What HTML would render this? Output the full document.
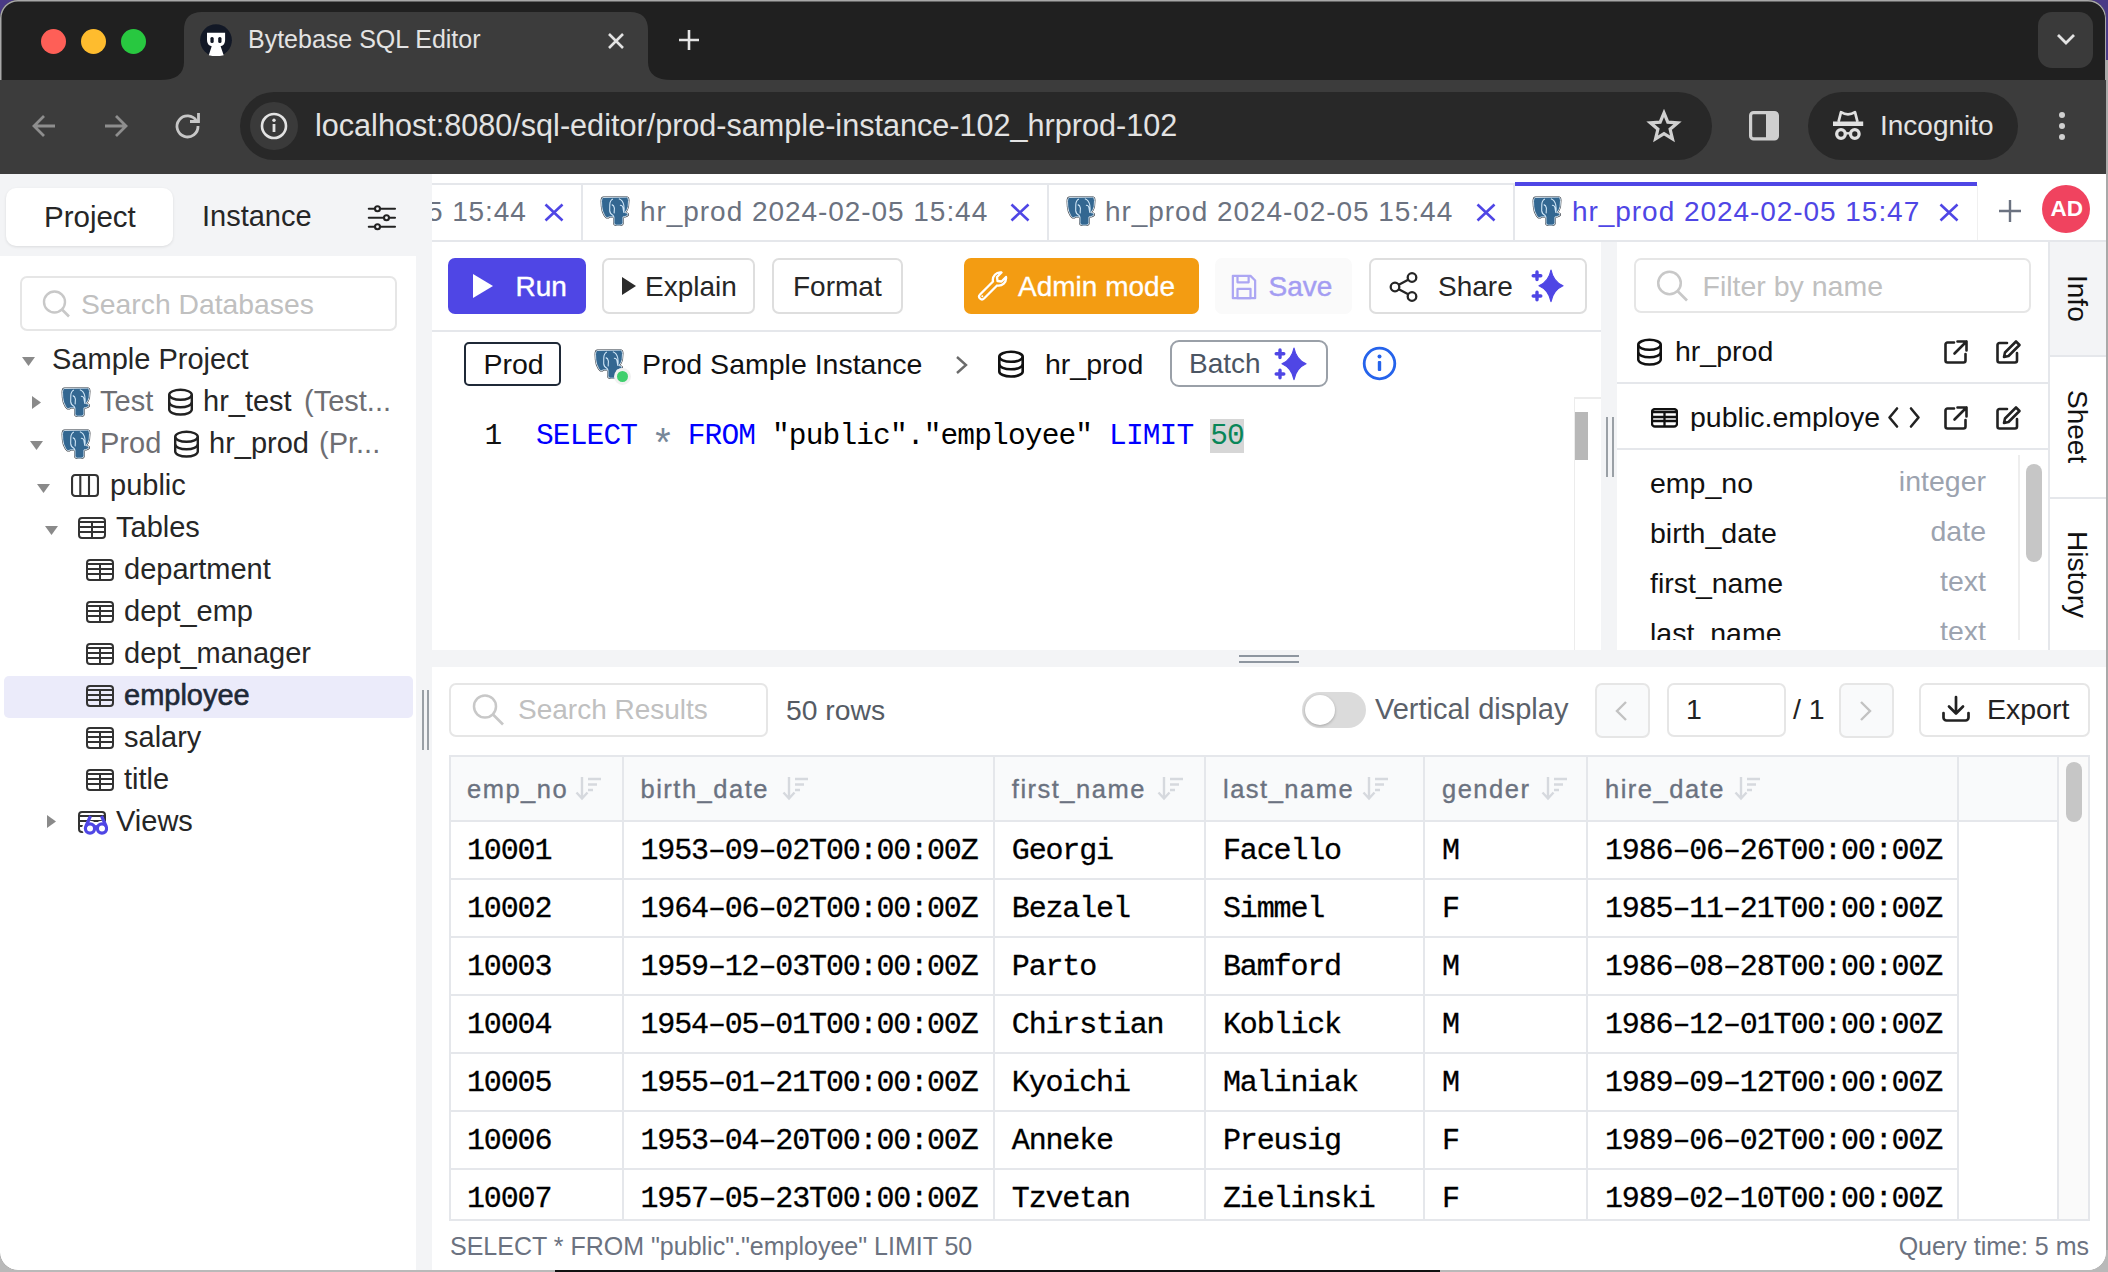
<!DOCTYPE html><html><head><meta charset="utf-8"><title>Bytebase SQL Editor</title><style>
html,body{margin:0;padding:0;}
body{width:2108px;height:1272px;position:relative;overflow:hidden;background:#b8b8b8;font-family:"Liberation Sans", sans-serif;}
.r{position:absolute;box-sizing:border-box;}
.t{position:absolute;white-space:nowrap;line-height:1;}
.s{font-family:"Liberation Sans", sans-serif;}
.m{font-family:"Liberation Mono", monospace;}
</style></head><body>

<div class="r" style="left:0px;top:0px;width:2108px;height:60px;background:#4a3a86;"></div>
<div class="r" style="left:2106px;top:60px;width:2px;height:1212px;background:#a9a9a9;"></div>
<div class="r" style="left:0px;top:1250px;width:2108px;height:22px;background:#b9b9b9;"></div>
<div class="r" style="left:555px;top:1262px;width:885px;height:10px;background:#111;"></div>
<div class="r" style="left:0px;top:0px;width:2106px;height:1270px;background:#202020;border-radius:18px;overflow:hidden;box-shadow:0 0 0 1.5px #a8a8a8 inset;"></div>
<div class="r" style="left:1.5px;top:1.5px;width:2103.0px;height:78.5px;background:#202020;border-radius:17px 17px 0 0;"></div>
<svg class="r" style="left:160px;top:12px" width="512" height="68" viewBox="0 0 512 68">
<path d="M0 68 Q24 68 24 50 L24 18 Q24 0 42 0 L470 0 Q488 0 488 18 L488 50 Q488 68 512 68 Z" fill="#3c3c3c"/></svg>
<div class="r" style="left:41px;top:29px;width:25px;height:25px;border-radius:50%;background:#fe5f57;"></div>
<div class="r" style="left:81px;top:29px;width:25px;height:25px;border-radius:50%;background:#febc2e;"></div>
<div class="r" style="left:121px;top:29px;width:25px;height:25px;border-radius:50%;background:#28c840;"></div>
<svg class="r" style="left:200px;top:24px" width="32" height="33" viewBox="0 0 32 33">
<circle cx="16" cy="16.2" r="15.9" fill="#121826"/>
<path d="M7 8.8 H25.1 V16 Q25.1 21.5 20.6 22.3 L23.7 31.2 Q16 33 8.8 31.2 L11.7 22.3 Q7 21.5 7 16 Z" fill="#fff"/>
<rect x="10.4" y="13.1" width="3.3" height="5.9" rx="1.5" fill="#121826"/><rect x="18.2" y="13.1" width="3.3" height="5.9" rx="1.5" fill="#121826"/></svg>
<div class="t s" style="left:248px;top:27.33px;font-size:25px;color:#e3e3e3;">Bytebase SQL Editor</div>
<svg class="r" style="left:606px;top:31px;" width="20" height="20" viewBox="0 0 20 20"><path d="M3 3 L17 17 M17 3 L3 17" stroke="#e3e3e3" stroke-width="2.6" stroke-linecap="butt"/></svg>
<svg class="r" style="left:678px;top:29px;" width="22" height="22" viewBox="0 0 22 22"><path d="M11 1 V21 M1 11 H21" stroke="#e3e3e3" stroke-width="2.6"/></svg>
<div class="r" style="left:2038px;top:12px;width:55px;height:56px;background:#3a3a3a;border-radius:14px;"></div>
<svg class="r" style="left:2056px;top:32px;" width="20" height="14" viewBox="0 0 20 14"><path d="M2 3 L10 11 L18 3" stroke="#e3e3e3" stroke-width="2.8" fill="none"/></svg>
<div class="r" style="left:0px;top:80px;width:2106px;height:94px;background:#3c3c3c;"></div>
<svg class="r" style="left:30px;top:112px;" width="28" height="28" viewBox="0 0 28 28"><path d="M25 14 H5 M14 4 L4 14 L14 24" stroke="#8e8e8e" stroke-width="2.8" fill="none"/></svg>
<svg class="r" style="left:102px;top:112px;" width="28" height="28" viewBox="0 0 28 28"><path d="M3 14 H23 M14 4 L24 14 L14 24" stroke="#8e8e8e" stroke-width="2.8" fill="none"/></svg>
<svg class="r" style="left:174px;top:112px;" width="28" height="28" viewBox="0 0 28 28"><path d="M22.5 9 A10.5 10.5 0 1 0 24 14" stroke="#c7c7c7" stroke-width="2.8" fill="none"/><path d="M16 9.5 L24.5 9.5 L24.5 1" stroke="#c7c7c7" stroke-width="2.8" fill="none"/></svg>
<div class="r" style="left:240px;top:92px;width:1471.5px;height:68px;background:#282828;border-radius:34px;"></div>
<div class="r" style="left:250px;top:102px;width:48px;height:48px;border-radius:50%;background:#3a3a3a;"></div>
<svg class="r" style="left:260px;top:112px;" width="28" height="28" viewBox="0 0 28 28"><circle cx="14" cy="14" r="12" stroke="#e3e3e3" stroke-width="2.6" fill="none"/><rect x="12.6" y="12" width="2.8" height="8" fill="#e3e3e3"/><circle cx="14" cy="8.3" r="1.7" fill="#e3e3e3"/></svg>
<div class="t s" style="left:315px;top:110.09px;font-size:30.6px;color:#e3e3e3;">localhost:8080/sql-editor/prod-sample-instance-102_hrprod-102</div>
<svg class="r" style="left:1646px;top:109px;" width="36" height="36" viewBox="-1.8 -1.3 39.6 39.6"><path d="M18 3 L22.2 13.2 L33 13.9 L24.7 20.9 L27.3 31.5 L18 25.8 L8.7 31.5 L11.3 20.9 L3 13.9 L13.8 13.2 Z" stroke="#d0d0d0" stroke-width="3.5" fill="none" stroke-linejoin="miter"/></svg>
<svg class="r" style="left:1749px;top:111px;" width="31" height="30" viewBox="0 0 31 30"><rect x="1.6" y="1.6" width="26.8" height="26.3" rx="3" stroke="#cfcfcf" stroke-width="3.2" fill="none"/><rect x="17" y="1.6" width="11.4" height="26.3" fill="#cfcfcf"/></svg>
<div class="r" style="left:1808px;top:92px;width:210px;height:68px;background:#282828;border-radius:34px;"></div>
<svg class="r" style="left:1830px;top:108px;" width="36" height="34" viewBox="0 0 36 34"><g stroke="#e0e0e0" fill="none"><path d="M8.5 13.8 L11 4.2 Q18 8.5 25 4.2 L27.5 13.8" stroke-width="2.7" stroke-linejoin="round"/><circle cx="11" cy="26" r="4.3" stroke-width="3.3"/><circle cx="24.8" cy="26" r="4.3" stroke-width="3.3"/><path d="M15.2 25.3 H20.6" stroke-width="2.4"/></g><rect x="3" y="13.5" width="30.2" height="4.5" fill="#e0e0e0"/></svg>
<div class="t s" style="left:1880px;top:112.29px;font-size:28px;color:#e3e3e3;">Incognito</div>
<div class="r" style="left:2059px;top:112px;width:6px;height:6px;border-radius:50%;background:#d0d0d0;"></div>
<div class="r" style="left:2059px;top:123px;width:6px;height:6px;border-radius:50%;background:#d0d0d0;"></div>
<div class="r" style="left:2059px;top:134px;width:6px;height:6px;border-radius:50%;background:#d0d0d0;"></div>
<div class="r" style="left:0px;top:174px;width:2106px;height:1096px;background:#fff;border-radius:0 0 18px 18px;"></div>
<div class="r" style="left:0px;top:174px;width:416px;height:82px;background:#f3f4f6;"></div>
<div class="r" style="left:6px;top:188px;width:167px;height:58px;background:#fff;border-radius:10px;box-shadow:0 1px 3px rgba(0,0,0,0.10);"></div>
<div class="t s" style="left:44px;top:202.02px;font-size:29.5px;color:#262626;">Project</div>
<div class="t s" style="left:202px;top:202.45px;font-size:29px;color:#262626;">Instance</div>
<svg class="r" style="left:366px;top:202px;" width="32" height="32" viewBox="0 0 32 32"><g stroke="#222" stroke-width="2.1" fill="none" stroke-linecap="round">
<path d="M2.8 6.8 H9 M14 6.8 H29"/><circle cx="11.5" cy="6.8" r="2.5"/>
<path d="M2.8 15.8 H18 M23 15.8 H29"/><circle cx="20.5" cy="15.8" r="2.5"/>
<path d="M2.8 24.8 H9 M14 24.8 H29"/><circle cx="11.5" cy="24.8" r="2.5"/></g></svg>
<div class="r" style="left:416px;top:174px;width:16px;height:1096px;background:#f3f4f6;"></div>
<div class="r" style="left:422px;top:690px;width:2px;height:60px;background:#9aa0a6;"></div>
<div class="r" style="left:427px;top:690px;width:2px;height:60px;background:#9aa0a6;"></div>
<div class="r" style="left:20px;top:276px;width:377px;height:55px;border:2px solid #e6e6e6;border-radius:7px;background:#fff;"></div>
<svg class="r" style="left:40px;top:288px;" width="34" height="34" viewBox="0 0 34 34"><circle cx="14.5" cy="14" r="10.5" stroke="#c8c8c8" stroke-width="2.4" fill="none"/><path d="M22 21.5 L29 28.5" stroke="#c8c8c8" stroke-width="2.6"/></svg>
<div class="t s" style="left:81px;top:289.64px;font-size:28.3px;color:#c0c0c0;">Search Databases</div>
<svg class="r" style="left:21.5px;top:356.5px;" width="13" height="9" viewBox="0 0 13 9"><path d="M0 0 L13 0 L6.5 9 Z" fill="#8a8a8a"/></svg>
<div class="t s" style="left:52px;top:345.45px;font-size:29px;color:#262626;">Sample Project</div>
<svg class="r" style="left:32px;top:396px;" width="9" height="13" viewBox="0 0 9 13"><path d="M0 0 L9 6.5 L0 13 Z" fill="#8a8a8a"/></svg>
<svg class="r" style="left:61px;top:387px" width="30" height="30" viewBox="-0.9 -0.9 31.5 33">
<path d="M1.8 0.7 L27.5 0.3 Q29.9 0.6 29.7 4.2 L29.3 10.7 Q28.5 14.5 25.7 17.3 Q28.5 17.5 29.2 19 Q29.6 20.8 25.7 21.8 L23.6 22.1 L23.6 28.7 Q23.4 31.2 20.5 31.2 L16.5 31.2 Q13.8 31.2 13.7 28.7 L13.7 22.1 L8.6 22.1 Q6.8 23.4 5.3 22.6 Q3.8 21.5 3.3 20.3 Q0.8 16 0.3 11 L0 4.8 Q0 1 1.8 0.7 Z" fill="none" stroke="#2a2f36" stroke-width="2.0"/>
<path d="M1.8 0.7 L27.5 0.3 Q29.9 0.6 29.7 4.2 L29.3 10.7 Q28.5 14.5 25.7 17.3 Q28.5 17.5 29.2 19 Q29.6 20.8 25.7 21.8 L23.6 22.1 L23.6 28.7 Q23.4 31.2 20.5 31.2 L16.5 31.2 Q13.8 31.2 13.7 28.7 L13.7 22.1 L8.6 22.1 Q6.8 23.4 5.3 22.6 Q3.8 21.5 3.3 20.3 Q0.8 16 0.3 11 L0 4.8 Q0 1 1.8 0.7 Z" fill="#336791" stroke="#e2eff9" stroke-width="1.0"/>
<path d="M12.5 2.4 Q9.2 4 9.1 9 L9 15.2 Q9.2 18.5 12.5 20.3 L13.7 22.1 M19.1 2.1 Q23.3 3.5 24.5 9 Q25.3 13 24.5 17.6 M11.3 8.6 Q13.7 9.3 14.2 12.5 L13.9 18.2 M20.3 9.5 Q22.7 8.5 23.6 12 L24.5 17.3" fill="none" stroke="#cfe6f7" stroke-width="1.2"/>
</svg>
<div class="t s" style="left:100px;top:387.45px;font-size:29px;color:#6e6e73;">Test</div>
<svg class="r" style="left:167.5px;top:388px;" width="25" height="28" viewBox="0 0 25 28"><g stroke="#222" stroke-width="2.4" fill="none">
<ellipse cx="12.5" cy="6.80" rx="11.30" ry="5.00"/>
<path d="M1.20 6.80 V21.50 A11.30 5.00 0 0 0 23.80 21.50 V6.80"/>
<path d="M1.20 14.30 A11.30 5.00 0 0 0 23.80 14.30"/></g></svg>
<div class="t s" style="left:203px;top:387.45px;font-size:29px;color:#262626;">hr_test</div>
<div class="t s" style="left:304px;top:387.45px;font-size:29px;color:#6e6e73;">(Test...</div>
<svg class="r" style="left:29.5px;top:441px;" width="13" height="9" viewBox="0 0 13 9"><path d="M0 0 L13 0 L6.5 9 Z" fill="#8a8a8a"/></svg>
<svg class="r" style="left:61px;top:429px" width="30" height="30" viewBox="-0.9 -0.9 31.5 33">
<path d="M1.8 0.7 L27.5 0.3 Q29.9 0.6 29.7 4.2 L29.3 10.7 Q28.5 14.5 25.7 17.3 Q28.5 17.5 29.2 19 Q29.6 20.8 25.7 21.8 L23.6 22.1 L23.6 28.7 Q23.4 31.2 20.5 31.2 L16.5 31.2 Q13.8 31.2 13.7 28.7 L13.7 22.1 L8.6 22.1 Q6.8 23.4 5.3 22.6 Q3.8 21.5 3.3 20.3 Q0.8 16 0.3 11 L0 4.8 Q0 1 1.8 0.7 Z" fill="none" stroke="#2a2f36" stroke-width="2.0"/>
<path d="M1.8 0.7 L27.5 0.3 Q29.9 0.6 29.7 4.2 L29.3 10.7 Q28.5 14.5 25.7 17.3 Q28.5 17.5 29.2 19 Q29.6 20.8 25.7 21.8 L23.6 22.1 L23.6 28.7 Q23.4 31.2 20.5 31.2 L16.5 31.2 Q13.8 31.2 13.7 28.7 L13.7 22.1 L8.6 22.1 Q6.8 23.4 5.3 22.6 Q3.8 21.5 3.3 20.3 Q0.8 16 0.3 11 L0 4.8 Q0 1 1.8 0.7 Z" fill="#336791" stroke="#e2eff9" stroke-width="1.0"/>
<path d="M12.5 2.4 Q9.2 4 9.1 9 L9 15.2 Q9.2 18.5 12.5 20.3 L13.7 22.1 M19.1 2.1 Q23.3 3.5 24.5 9 Q25.3 13 24.5 17.6 M11.3 8.6 Q13.7 9.3 14.2 12.5 L13.9 18.2 M20.3 9.5 Q22.7 8.5 23.6 12 L24.5 17.3" fill="none" stroke="#cfe6f7" stroke-width="1.2"/>
</svg>
<div class="t s" style="left:100px;top:429.45px;font-size:29px;color:#6e6e73;">Prod</div>
<svg class="r" style="left:173.5px;top:430px;" width="25" height="28" viewBox="0 0 25 28"><g stroke="#222" stroke-width="2.4" fill="none">
<ellipse cx="12.5" cy="6.80" rx="11.30" ry="5.00"/>
<path d="M1.20 6.80 V21.50 A11.30 5.00 0 0 0 23.80 21.50 V6.80"/>
<path d="M1.20 14.30 A11.30 5.00 0 0 0 23.80 14.30"/></g></svg>
<div class="t s" style="left:209px;top:429.45px;font-size:29px;color:#262626;">hr_prod</div>
<div class="t s" style="left:319px;top:429.45px;font-size:29px;color:#6e6e73;">(Pr...</div>
<svg class="r" style="left:37px;top:483.5px;" width="13" height="9" viewBox="0 0 13 9"><path d="M0 0 L13 0 L6.5 9 Z" fill="#8a8a8a"/></svg>
<svg class="r" style="left:71px;top:474px;" width="28" height="23" viewBox="0 0 28 23"><g stroke="#333" stroke-width="2.1" fill="none"><rect x="1.05" y="1.05" width="25.9" height="20.9" rx="3"/><path d="M9.3 1 V22 M18 1 V22"/></g></svg>
<div class="t s" style="left:110px;top:471.45px;font-size:29px;color:#262626;">public</div>
<svg class="r" style="left:45px;top:525.5px;" width="13" height="9" viewBox="0 0 13 9"><path d="M0 0 L13 0 L6.5 9 Z" fill="#8a8a8a"/></svg>
<svg class="r" style="left:78px;top:517px;" width="28" height="22" viewBox="0 0 28 22"><g stroke="#333" stroke-width="2" fill="none">
<rect x="1" y="1" width="26" height="20" rx="3"/>
<path d="M1 5 H27 M1 10 H27 M1 15 H27"/><path d="M14 5 V21"/></g></svg>
<div class="t s" style="left:116px;top:513.45px;font-size:29px;color:#262626;">Tables</div>
<div class="r" style="left:4px;top:676px;width:409px;height:42px;background:#ebebfa;border-radius:5px;"></div>
<svg class="r" style="left:86px;top:559px;" width="28" height="22" viewBox="0 0 28 22"><g stroke="#333" stroke-width="2" fill="none">
<rect x="1" y="1" width="26" height="20" rx="3"/>
<path d="M1 5 H27 M1 10 H27 M1 15 H27"/><path d="M14 5 V21"/></g></svg>
<div class="t s" style="left:124px;top:555.45px;font-size:29px;color:#262626;">department</div>
<svg class="r" style="left:86px;top:601px;" width="28" height="22" viewBox="0 0 28 22"><g stroke="#333" stroke-width="2" fill="none">
<rect x="1" y="1" width="26" height="20" rx="3"/>
<path d="M1 5 H27 M1 10 H27 M1 15 H27"/><path d="M14 5 V21"/></g></svg>
<div class="t s" style="left:124px;top:597.45px;font-size:29px;color:#262626;">dept_emp</div>
<svg class="r" style="left:86px;top:643px;" width="28" height="22" viewBox="0 0 28 22"><g stroke="#333" stroke-width="2" fill="none">
<rect x="1" y="1" width="26" height="20" rx="3"/>
<path d="M1 5 H27 M1 10 H27 M1 15 H27"/><path d="M14 5 V21"/></g></svg>
<div class="t s" style="left:124px;top:639.45px;font-size:29px;color:#262626;">dept_manager</div>
<svg class="r" style="left:86px;top:685px;" width="28" height="22" viewBox="0 0 28 22"><g stroke="#333" stroke-width="2" fill="none">
<rect x="1" y="1" width="26" height="20" rx="3"/>
<path d="M1 5 H27 M1 10 H27 M1 15 H27"/><path d="M14 5 V21"/></g></svg>
<div class="t s" style="left:124px;top:681.45px;font-size:29px;color:#1f2937;-webkit-text-stroke:0.6px #1f2937;">employee</div>
<svg class="r" style="left:86px;top:727px;" width="28" height="22" viewBox="0 0 28 22"><g stroke="#333" stroke-width="2" fill="none">
<rect x="1" y="1" width="26" height="20" rx="3"/>
<path d="M1 5 H27 M1 10 H27 M1 15 H27"/><path d="M14 5 V21"/></g></svg>
<div class="t s" style="left:124px;top:723.45px;font-size:29px;color:#262626;">salary</div>
<svg class="r" style="left:86px;top:769px;" width="28" height="22" viewBox="0 0 28 22"><g stroke="#333" stroke-width="2" fill="none">
<rect x="1" y="1" width="26" height="20" rx="3"/>
<path d="M1 5 H27 M1 10 H27 M1 15 H27"/><path d="M14 5 V21"/></g></svg>
<div class="t s" style="left:124px;top:765.45px;font-size:29px;color:#262626;">title</div>
<svg class="r" style="left:47px;top:815px;" width="9" height="13" viewBox="0 0 9 13"><path d="M0 0 L9 6.5 L0 13 Z" fill="#8a8a8a"/></svg>
<svg class="r" style="left:78px;top:811px;" width="28" height="22" viewBox="0 0 28 22"><g stroke="#333" stroke-width="2" fill="none">
<rect x="1" y="1" width="26" height="20" rx="3"/>
<path d="M1 5 H27 M1 10 H27 M1 15 H27"/></g></svg>
<svg class="r" style="left:82px;top:813px;" width="26" height="22" viewBox="0 0 26 22"><g stroke="#fff" stroke-width="6.5" fill="#fff"><circle cx="8" cy="15.5" r="4.6"/><circle cx="20" cy="15.5" r="4.6"/></g><g stroke="#4f46e5" stroke-width="3.2" fill="none"><circle cx="8" cy="15.5" r="4.6"/><circle cx="20" cy="15.5" r="4.6"/><path d="M4 13 L8.5 3 M24 13 L19.5 3 M12.5 14.5 Q14 12.5 15.5 14.5"/></g></svg>
<div class="t s" style="left:116px;top:807.45px;font-size:29px;color:#262626;">Views</div>
<div class="r" style="left:432px;top:183px;width:1083px;height:2px;background:#e5e7eb;"></div>
<div class="r" style="left:432px;top:240px;width:1674px;height:2px;background:#e5e7eb;"></div>
<div class="r" style="left:581px;top:185px;width:2px;height:55px;background:#e5e7eb;"></div>
<div class="t s" style="left:432px;top:198.09px;font-size:28px;color:#6b7280;letter-spacing:0.9px;width:110px;overflow:hidden;"><span style="margin-left:-5px">5 15:44</span></div>
<svg class="r" style="left:543.5px;top:202.5px;" width="20" height="19" viewBox="0 0 20 19"><path d="M1.5 1.5 L18.5 17.5 M18.5 1.5 L1.5 17.5" stroke="#4f46e5" stroke-width="2.6"/></svg>
<svg class="r" style="left:600px;top:196px" width="30" height="30" viewBox="-0.9 -0.9 31.5 33">
<path d="M1.8 0.7 L27.5 0.3 Q29.9 0.6 29.7 4.2 L29.3 10.7 Q28.5 14.5 25.7 17.3 Q28.5 17.5 29.2 19 Q29.6 20.8 25.7 21.8 L23.6 22.1 L23.6 28.7 Q23.4 31.2 20.5 31.2 L16.5 31.2 Q13.8 31.2 13.7 28.7 L13.7 22.1 L8.6 22.1 Q6.8 23.4 5.3 22.6 Q3.8 21.5 3.3 20.3 Q0.8 16 0.3 11 L0 4.8 Q0 1 1.8 0.7 Z" fill="none" stroke="#2a2f36" stroke-width="2.0"/>
<path d="M1.8 0.7 L27.5 0.3 Q29.9 0.6 29.7 4.2 L29.3 10.7 Q28.5 14.5 25.7 17.3 Q28.5 17.5 29.2 19 Q29.6 20.8 25.7 21.8 L23.6 22.1 L23.6 28.7 Q23.4 31.2 20.5 31.2 L16.5 31.2 Q13.8 31.2 13.7 28.7 L13.7 22.1 L8.6 22.1 Q6.8 23.4 5.3 22.6 Q3.8 21.5 3.3 20.3 Q0.8 16 0.3 11 L0 4.8 Q0 1 1.8 0.7 Z" fill="#336791" stroke="#e2eff9" stroke-width="1.0"/>
<path d="M12.5 2.4 Q9.2 4 9.1 9 L9 15.2 Q9.2 18.5 12.5 20.3 L13.7 22.1 M19.1 2.1 Q23.3 3.5 24.5 9 Q25.3 13 24.5 17.6 M11.3 8.6 Q13.7 9.3 14.2 12.5 L13.9 18.2 M20.3 9.5 Q22.7 8.5 23.6 12 L24.5 17.3" fill="none" stroke="#cfe6f7" stroke-width="1.2"/>
</svg>
<div class="t s" style="left:640px;top:198.09px;font-size:28px;color:#6b7280;letter-spacing:0.95px;">hr_prod 2024-02-05 15:44</div>
<svg class="r" style="left:1009.5px;top:202.5px;" width="20" height="19" viewBox="0 0 20 19"><path d="M1.5 1.5 L18.5 17.5 M18.5 1.5 L1.5 17.5" stroke="#4f46e5" stroke-width="2.6"/></svg>
<div class="r" style="left:1047px;top:185px;width:2px;height:55px;background:#e5e7eb;"></div>
<svg class="r" style="left:1066px;top:196px" width="30" height="30" viewBox="-0.9 -0.9 31.5 33">
<path d="M1.8 0.7 L27.5 0.3 Q29.9 0.6 29.7 4.2 L29.3 10.7 Q28.5 14.5 25.7 17.3 Q28.5 17.5 29.2 19 Q29.6 20.8 25.7 21.8 L23.6 22.1 L23.6 28.7 Q23.4 31.2 20.5 31.2 L16.5 31.2 Q13.8 31.2 13.7 28.7 L13.7 22.1 L8.6 22.1 Q6.8 23.4 5.3 22.6 Q3.8 21.5 3.3 20.3 Q0.8 16 0.3 11 L0 4.8 Q0 1 1.8 0.7 Z" fill="none" stroke="#2a2f36" stroke-width="2.0"/>
<path d="M1.8 0.7 L27.5 0.3 Q29.9 0.6 29.7 4.2 L29.3 10.7 Q28.5 14.5 25.7 17.3 Q28.5 17.5 29.2 19 Q29.6 20.8 25.7 21.8 L23.6 22.1 L23.6 28.7 Q23.4 31.2 20.5 31.2 L16.5 31.2 Q13.8 31.2 13.7 28.7 L13.7 22.1 L8.6 22.1 Q6.8 23.4 5.3 22.6 Q3.8 21.5 3.3 20.3 Q0.8 16 0.3 11 L0 4.8 Q0 1 1.8 0.7 Z" fill="#336791" stroke="#e2eff9" stroke-width="1.0"/>
<path d="M12.5 2.4 Q9.2 4 9.1 9 L9 15.2 Q9.2 18.5 12.5 20.3 L13.7 22.1 M19.1 2.1 Q23.3 3.5 24.5 9 Q25.3 13 24.5 17.6 M11.3 8.6 Q13.7 9.3 14.2 12.5 L13.9 18.2 M20.3 9.5 Q22.7 8.5 23.6 12 L24.5 17.3" fill="none" stroke="#cfe6f7" stroke-width="1.2"/>
</svg>
<div class="t s" style="left:1105px;top:198.09px;font-size:28px;color:#6b7280;letter-spacing:0.95px;">hr_prod 2024-02-05 15:44</div>
<svg class="r" style="left:1475.5px;top:202.5px;" width="20" height="19" viewBox="0 0 20 19"><path d="M1.5 1.5 L18.5 17.5 M18.5 1.5 L1.5 17.5" stroke="#4f46e5" stroke-width="2.6"/></svg>
<div class="r" style="left:1513px;top:185px;width:2px;height:55px;background:#e5e7eb;"></div>
<div class="r" style="left:1515px;top:182px;width:462px;height:4px;background:#4f46e5;"></div>
<svg class="r" style="left:1532px;top:196px" width="30" height="30" viewBox="-0.9 -0.9 31.5 33">
<path d="M1.8 0.7 L27.5 0.3 Q29.9 0.6 29.7 4.2 L29.3 10.7 Q28.5 14.5 25.7 17.3 Q28.5 17.5 29.2 19 Q29.6 20.8 25.7 21.8 L23.6 22.1 L23.6 28.7 Q23.4 31.2 20.5 31.2 L16.5 31.2 Q13.8 31.2 13.7 28.7 L13.7 22.1 L8.6 22.1 Q6.8 23.4 5.3 22.6 Q3.8 21.5 3.3 20.3 Q0.8 16 0.3 11 L0 4.8 Q0 1 1.8 0.7 Z" fill="none" stroke="#2a2f36" stroke-width="2.0"/>
<path d="M1.8 0.7 L27.5 0.3 Q29.9 0.6 29.7 4.2 L29.3 10.7 Q28.5 14.5 25.7 17.3 Q28.5 17.5 29.2 19 Q29.6 20.8 25.7 21.8 L23.6 22.1 L23.6 28.7 Q23.4 31.2 20.5 31.2 L16.5 31.2 Q13.8 31.2 13.7 28.7 L13.7 22.1 L8.6 22.1 Q6.8 23.4 5.3 22.6 Q3.8 21.5 3.3 20.3 Q0.8 16 0.3 11 L0 4.8 Q0 1 1.8 0.7 Z" fill="#336791" stroke="#e2eff9" stroke-width="1.0"/>
<path d="M12.5 2.4 Q9.2 4 9.1 9 L9 15.2 Q9.2 18.5 12.5 20.3 L13.7 22.1 M19.1 2.1 Q23.3 3.5 24.5 9 Q25.3 13 24.5 17.6 M11.3 8.6 Q13.7 9.3 14.2 12.5 L13.9 18.2 M20.3 9.5 Q22.7 8.5 23.6 12 L24.5 17.3" fill="none" stroke="#cfe6f7" stroke-width="1.2"/>
</svg>
<div class="t s" style="left:1572px;top:198.09px;font-size:28px;color:#4f46e5;letter-spacing:0.95px;">hr_prod 2024-02-05 15:47</div>
<svg class="r" style="left:1938.5px;top:202.5px;" width="20" height="19" viewBox="0 0 20 19"><path d="M1.5 1.5 L18.5 17.5 M18.5 1.5 L1.5 17.5" stroke="#4f46e5" stroke-width="2.6"/></svg>
<div class="r" style="left:1977px;top:185px;width:1px;height:55px;background:#f0f0f0;"></div>
<svg class="r" style="left:1998px;top:199px;" width="24" height="24" viewBox="0 0 24 24"><path d="M12 1 V23 M1 12 H23" stroke="#6b7280" stroke-width="2.4"/></svg>
<div class="r" style="left:2042px;top:185px;width:48px;height:48px;border-radius:50%;background:#f0435f;"></div>
<div class="t s" style="left:2050.5px;top:198.45px;font-size:22.5px;color:#fff;font-weight:700;">AD</div>
<div class="r" style="left:432px;top:330px;width:1169px;height:2px;background:#e5e7eb;"></div>
<div class="r" style="left:448px;top:258px;width:138px;height:56px;background:#4f46e5;border-radius:7px;"></div>
<svg class="r" style="left:472px;top:273px;" width="22" height="26" viewBox="0 0 22 26"><path d="M1 1 L21 13 L1 25 Z" fill="#fff"/></svg>
<div class="t s" style="left:515.5px;top:272.59px;font-size:28px;color:#fff;-webkit-text-stroke:0.4px #fff;">Run</div>
<div class="r" style="left:602px;top:258px;width:153px;height:56px;border:2px solid #dedede;border-radius:7px;background:#fff;"></div>
<svg class="r" style="left:621px;top:276px;" width="16" height="20" viewBox="0 0 16 20"><path d="M1 1 L15 10 L1 19 Z" fill="#2b2b2b"/></svg>
<div class="t s" style="left:645px;top:272.59px;font-size:28px;color:#262626;">Explain</div>
<div class="r" style="left:772px;top:258px;width:131px;height:56px;border:2px solid #dedede;border-radius:7px;background:#fff;"></div>
<div class="t s" style="left:793px;top:272.59px;font-size:28px;color:#262626;">Format</div>
<div class="r" style="left:964px;top:258px;width:235px;height:56px;background:#f39c12;border-radius:7px;"></div>
<svg class="r" style="left:976px;top:269px;" width="33" height="33" viewBox="0 0 33 33"><path d="M25.5 3.5 A7.5 7.5 0 0 0 17 12.5 L4 25.5 A2.8 2.8 0 0 0 8 29.5 L21 16.5 A7.5 7.5 0 0 0 30 8 L25.5 12.5 L21.5 12 L21 8 Z" stroke="#fff" stroke-width="2.3" fill="none" stroke-linejoin="round"/><circle cx="6.3" cy="27.2" r="1" fill="#fff"/></svg>
<div class="t s" style="left:1018px;top:272.59px;font-size:28px;color:#fff;-webkit-text-stroke:0.3px #fff;">Admin mode</div>
<div class="r" style="left:1215px;top:258px;width:137px;height:56px;background:#fafafa;border-radius:7px;"></div>
<svg class="r" style="left:1231px;top:273.5px;" width="26" height="26" viewBox="0 0 28 28"><g stroke="#aca6f3" stroke-width="2.4" fill="none" stroke-linejoin="round"><path d="M2 2 H21 L26 7 V26 H2 Z"/><path d="M7 2 V9 H19 V2"/><rect x="7" y="16" width="14" height="10"/></g></svg>
<div class="t s" style="left:1268.5px;top:272.59px;font-size:28px;color:#a49df2;-webkit-text-stroke:0.45px #a49df2;">Save</div>
<div class="r" style="left:1369px;top:258px;width:218px;height:56px;border:2px solid #dedede;border-radius:7px;background:#fff;"></div>
<svg class="r" style="left:1388px;top:271px;" width="32" height="32" viewBox="0 0 32 32"><g stroke="#262626" stroke-width="2.3" fill="none"><circle cx="24" cy="6.5" r="4.3"/><circle cx="7" cy="16" r="4.3"/><circle cx="24" cy="25.5" r="4.3"/><path d="M10.8 13.8 L20.2 8.7 M10.8 18.2 L20.2 23.3"/></g></svg>
<div class="t s" style="left:1438px;top:272.59px;font-size:28px;color:#262626;">Share</div>
<svg class="r" style="left:1530px;top:269px;" width="34" height="34" viewBox="0 0 34 34"><path d="M21 1 Q23.2 12.5 33 16.8 Q23.2 21.1 21 32.6 Q18.8 21.1 9 16.8 Q18.8 12.5 21 1 Z" fill="#4f46e5" stroke="#4f46e5" stroke-width="1.2" stroke-linejoin="round"/>
<g stroke="#4f46e5" stroke-width="3.4" stroke-linecap="round"><path d="M7 3 V10.6 M3.2 6.8 H10.8 M7 23.2 V30.8 M3.2 27 H10.8"/></g></svg>
<div class="r" style="left:464px;top:342px;width:97px;height:44px;border:2px solid #1f2937;border-radius:5px;"></div>
<div class="t s" style="left:483.5px;top:349.87px;font-size:28.5px;color:#111;">Prod</div>
<svg class="r" style="left:594px;top:349px" width="30" height="30" viewBox="-0.9 -0.9 31.5 33">
<path d="M1.8 0.7 L27.5 0.3 Q29.9 0.6 29.7 4.2 L29.3 10.7 Q28.5 14.5 25.7 17.3 Q28.5 17.5 29.2 19 Q29.6 20.8 25.7 21.8 L23.6 22.1 L23.6 28.7 Q23.4 31.2 20.5 31.2 L16.5 31.2 Q13.8 31.2 13.7 28.7 L13.7 22.1 L8.6 22.1 Q6.8 23.4 5.3 22.6 Q3.8 21.5 3.3 20.3 Q0.8 16 0.3 11 L0 4.8 Q0 1 1.8 0.7 Z" fill="none" stroke="#2a2f36" stroke-width="2.0"/>
<path d="M1.8 0.7 L27.5 0.3 Q29.9 0.6 29.7 4.2 L29.3 10.7 Q28.5 14.5 25.7 17.3 Q28.5 17.5 29.2 19 Q29.6 20.8 25.7 21.8 L23.6 22.1 L23.6 28.7 Q23.4 31.2 20.5 31.2 L16.5 31.2 Q13.8 31.2 13.7 28.7 L13.7 22.1 L8.6 22.1 Q6.8 23.4 5.3 22.6 Q3.8 21.5 3.3 20.3 Q0.8 16 0.3 11 L0 4.8 Q0 1 1.8 0.7 Z" fill="#336791" stroke="#e2eff9" stroke-width="1.0"/>
<path d="M12.5 2.4 Q9.2 4 9.1 9 L9 15.2 Q9.2 18.5 12.5 20.3 L13.7 22.1 M19.1 2.1 Q23.3 3.5 24.5 9 Q25.3 13 24.5 17.6 M11.3 8.6 Q13.7 9.3 14.2 12.5 L13.9 18.2 M20.3 9.5 Q22.7 8.5 23.6 12 L24.5 17.3" fill="none" stroke="#cfe6f7" stroke-width="1.2"/>
</svg>
<div class="r" style="left:614px;top:368px;width:17px;height:17px;border-radius:50%;background:#3fcf6d;border:3px solid #f1f1f1;"></div>
<div class="t s" style="left:642px;top:349.87px;font-size:28.5px;color:#111;">Prod Sample Instance</div>
<svg class="r" style="left:954px;top:355px;" width="16" height="20" viewBox="0 0 16 20"><path d="M3 2 L12 10 L3 18" stroke="#6b6b6b" stroke-width="2.4" fill="none"/></svg>
<svg class="r" style="left:998px;top:349.5px;" width="26" height="28" viewBox="0 0 26 28"><g stroke="#111" stroke-width="2.6" fill="none">
<ellipse cx="13.0" cy="6.80" rx="11.70" ry="5.00"/>
<path d="M1.30 6.80 V21.50 A11.70 5.00 0 0 0 24.70 21.50 V6.80"/>
<path d="M1.30 14.30 A11.70 5.00 0 0 0 24.70 14.30"/></g></svg>
<div class="t s" style="left:1045px;top:349.87px;font-size:28.5px;color:#111;">hr_prod</div>
<div class="r" style="left:1170px;top:340px;width:158px;height:47px;border:2px solid #9aa0a8;border-radius:9px;"></div>
<div class="t s" style="left:1189px;top:350.29px;font-size:28px;color:#4b5563;">Batch</div>
<svg class="r" style="left:1273px;top:347px;" width="34" height="34" viewBox="0 0 34 34"><path d="M21 1 Q23.2 12.5 33 16.8 Q23.2 21.1 21 32.6 Q18.8 21.1 9 16.8 Q18.8 12.5 21 1 Z" fill="#4f46e5" stroke="#4f46e5" stroke-width="1.2" stroke-linejoin="round"/>
<g stroke="#4f46e5" stroke-width="3.4" stroke-linecap="round"><path d="M7 3 V10.6 M3.2 6.8 H10.8 M7 23.2 V30.8 M3.2 27 H10.8"/></g></svg>
<svg class="r" style="left:1362px;top:346px;" width="35" height="35" viewBox="0 0 35 35"><circle cx="17.5" cy="17.5" r="15.3" stroke="#2563eb" stroke-width="2.8" fill="none"/><rect x="15.8" y="15" width="3.4" height="10" rx="1" fill="#2563eb"/><circle cx="17.5" cy="10.5" r="2" fill="#2563eb"/></svg>
<div class="t m" style="left:484.5px;top:422.10px;font-size:29.5px;color:#111;letter-spacing:-0.85px;">1</div>
<div class="t m" style="left:536px;top:422.10px;font-size:29.5px;color:#000;letter-spacing:-0.85px;"><span style="color:#0000ff">SELECT</span> <span style="color:#778899;display:inline-block;transform:translateY(11px) scale(1.35);">*</span> <span style="color:#0000ff">FROM</span> <span style="color:#000">"public"."employee"</span> <span style="color:#0000ff">LIMIT</span> <span style="color:#098658;background:#d6d6d6;">50</span></div>
<div class="r" style="left:1574px;top:398px;width:1px;height:252px;background:#ececec;"></div>
<div class="r" style="left:1574px;top:397px;width:27px;height:1.5px;background:#ececec;"></div>
<div class="r" style="left:1575px;top:412px;width:13px;height:48px;background:#b8b8b8;"></div>
<div class="r" style="left:1601px;top:242px;width:16px;height:408px;background:#f3f4f6;"></div>
<div class="r" style="left:1606px;top:417px;width:2px;height:60px;background:#9aa0a6;"></div>
<div class="r" style="left:1612px;top:417px;width:2px;height:60px;background:#9aa0a6;"></div>
<div class="r" style="left:432px;top:650px;width:1674px;height:17px;background:#f3f4f6;"></div>
<div class="r" style="left:1239px;top:655px;width:60px;height:2px;background:#8e96a0;"></div>
<div class="r" style="left:1239px;top:661px;width:60px;height:2px;background:#8e96a0;"></div>
<div class="r" style="left:1617px;top:242px;width:431px;height:408px;background:#fff;"></div>
<div class="r" style="left:1634px;top:258px;width:397px;height:55px;border:2px solid #e6e6e6;border-radius:7px;"></div>
<svg class="r" style="left:1654px;top:268px;" width="36" height="36" viewBox="0 0 36 36"><circle cx="15.5" cy="15" r="11.3" stroke="#c8c8c8" stroke-width="2.5" fill="none"/><path d="M23.5 23 L33 32.5" stroke="#c8c8c8" stroke-width="2.7"/></svg>
<div class="t s" style="left:1702.5px;top:272.37px;font-size:28.5px;color:#c0c0c0;">Filter by name</div>
<svg class="r" style="left:1636.5px;top:338px;" width="25" height="28" viewBox="0 0 25 28"><g stroke="#111" stroke-width="2.5" fill="none">
<ellipse cx="12.5" cy="6.80" rx="11.25" ry="5.00"/>
<path d="M1.25 6.80 V21.50 A11.25 5.00 0 0 0 23.75 21.50 V6.80"/>
<path d="M1.25 14.30 A11.25 5.00 0 0 0 23.75 14.30"/></g></svg>
<div class="t s" style="left:1675px;top:337.47px;font-size:28.5px;color:#111;">hr_prod</div>
<svg class="r" style="left:1943px;top:339px;" width="26" height="26" viewBox="0 0 26 26"><g stroke="#222" stroke-width="2.6" fill="none" stroke-linecap="round" stroke-linejoin="round"><path d="M11 3.5 H4.5 A2 2 0 0 0 2.5 5.5 V21.5 A2 2 0 0 0 4.5 23.5 H20.5 A2 2 0 0 0 22.5 21.5 V15"/><path d="M14.5 2.5 H23.5 V11.5 M23.5 2.5 L11.5 14.5"/></g></svg>
<svg class="r" style="left:1995px;top:339px;" width="27" height="26" viewBox="0 0 27 26"><g stroke="#222" stroke-width="2.6" fill="none" stroke-linecap="round" stroke-linejoin="round"><path d="M12 4 H4.5 A2 2 0 0 0 2.5 6 V21.5 A2 2 0 0 0 4.5 23.5 H20 A2 2 0 0 0 22 21.5 V14"/><path d="M21 2.5 L24.5 6 L13.5 17 L9 18 L10 13.5 Z"/></g></svg>
<div class="r" style="left:1617px;top:381.5px;width:431px;height:2.0px;background:#e5e7eb;"></div>
<svg class="r" style="left:1651px;top:408px;" width="27" height="19.5" viewBox="0 0 27 19.5"><g stroke="#111" stroke-width="2.3" fill="none">
<rect x="1" y="1" width="25" height="17.5" rx="3"/>
<path d="M1 4 H26 M1 9 H26 M1 13 H26"/><path d="M13.5 5 V18.5"/></g></svg>
<div class="t s" style="left:1690px;top:402.87px;font-size:28.5px;color:#111;width:190px;overflow:hidden;">public.employe</div>
<svg class="r" style="left:1887px;top:405px;" width="34" height="25" viewBox="0 0 34 25"><g stroke="#222" stroke-width="2.6" fill="none" stroke-linecap="round" stroke-linejoin="round"><path d="M10 3.5 L2.5 12.5 L10 21.5 M24 3.5 L31.5 12.5 L24 21.5"/></g></svg>
<svg class="r" style="left:1943px;top:405px;" width="26" height="26" viewBox="0 0 26 26"><g stroke="#222" stroke-width="2.6" fill="none" stroke-linecap="round" stroke-linejoin="round"><path d="M11 3.5 H4.5 A2 2 0 0 0 2.5 5.5 V21.5 A2 2 0 0 0 4.5 23.5 H20.5 A2 2 0 0 0 22.5 21.5 V15"/><path d="M14.5 2.5 H23.5 V11.5 M23.5 2.5 L11.5 14.5"/></g></svg>
<svg class="r" style="left:1995px;top:405px;" width="27" height="26" viewBox="0 0 27 26"><g stroke="#222" stroke-width="2.6" fill="none" stroke-linecap="round" stroke-linejoin="round"><path d="M12 4 H4.5 A2 2 0 0 0 2.5 6 V21.5 A2 2 0 0 0 4.5 23.5 H20 A2 2 0 0 0 22 21.5 V14"/><path d="M21 2.5 L24.5 6 L13.5 17 L9 18 L10 13.5 Z"/></g></svg>
<div class="r" style="left:1617px;top:448px;width:431px;height:2px;background:#e5e7eb;"></div>
<div class="r" style="left:1617px;top:455px;width:400px;height:185px;overflow:hidden;">
<div class="t s" style="left:33px;top:14.37px;font-size:28.5px;color:#111;">emp_no</div>
<div class="t s" style="right:31px;top:12.37px;font-size:28.5px;color:#9ca3af;">integer</div>
<div class="t s" style="left:33px;top:64.37px;font-size:28.5px;color:#111;">birth_date</div>
<div class="t s" style="right:31px;top:62.37px;font-size:28.5px;color:#9ca3af;">date</div>
<div class="t s" style="left:33px;top:114.37px;font-size:28.5px;color:#111;">first_name</div>
<div class="t s" style="right:31px;top:112.37px;font-size:28.5px;color:#9ca3af;">text</div>
<div class="t s" style="left:33px;top:164.37px;font-size:28.5px;color:#111;">last_name</div>
<div class="t s" style="right:31px;top:162.37px;font-size:28.5px;color:#9ca3af;">text</div>
</div>
<div class="r" style="left:2018px;top:455px;width:1.5px;height:185px;background:#eeeeee;"></div>
<div class="r" style="left:2026px;top:464px;width:16px;height:98px;background:#c6c6c6;border-radius:8px;"></div>
<div class="r" style="left:2048px;top:242px;width:58px;height:408px;background:#fff;"></div>
<div class="r" style="left:2048px;top:242px;width:2px;height:408px;background:#e5e7eb;"></div>
<div class="r" style="left:2050px;top:242px;width:56px;height:113px;background:#f3f4f6;"></div>
<div class="r" style="left:2050px;top:354.5px;width:56px;height:2.0px;background:#e5e7eb;"></div>
<div class="r" style="left:2050px;top:496.5px;width:56px;height:2.0px;background:#e5e7eb;"></div>
<div class="t s" style="left:2063px;top:275px;font-size:28px;color:#111;writing-mode:vertical-rl;line-height:28px;">Info</div>
<div class="t s" style="left:2063px;top:390px;font-size:28px;color:#111;writing-mode:vertical-rl;line-height:28px;">Sheet</div>
<div class="t s" style="left:2063px;top:531px;font-size:28px;color:#111;writing-mode:vertical-rl;line-height:28px;">History</div>
<div class="r" style="left:432px;top:667px;width:1674px;height:603px;background:#fff;border-radius:0 0 18px 0;"></div>
<div class="r" style="left:448.5px;top:682.5px;width:319.0px;height:54.5px;border:2px solid #e6e6e6;border-radius:7px;"></div>
<svg class="r" style="left:470px;top:692px;" width="36" height="36" viewBox="0 0 36 36"><circle cx="15" cy="14.5" r="11" stroke="#c8c8c8" stroke-width="2.5" fill="none"/><path d="M23 22.5 L33 32.5" stroke="#c8c8c8" stroke-width="2.7"/></svg>
<div class="t s" style="left:518px;top:695.89px;font-size:28px;color:#c0c0c0;">Search Results</div>
<div class="t s" style="left:786px;top:695.64px;font-size:28.3px;color:#555b64;">50 rows</div>
<div class="r" style="left:1302px;top:692px;width:64px;height:36px;background:#dbdbdb;border-radius:18px;"></div>
<div class="r" style="left:1305px;top:695px;width:30px;height:30px;border-radius:50%;background:#fff;box-shadow:0 1px 3px rgba(0,0,0,0.25);"></div>
<div class="t s" style="left:1375px;top:695.05px;font-size:29px;color:#5b616a;">Vertical display</div>
<div class="r" style="left:1594.5px;top:682.5px;width:55.0px;height:55.0px;border:2px solid #e6e6e6;border-radius:7px;background:#f9fafb;"></div>
<svg class="r" style="left:1613px;top:700px;" width="16" height="22" viewBox="0 0 16 22"><path d="M13 2 L4 11 L13 20" stroke="#c2c2c2" stroke-width="2.4" fill="none"/></svg>
<div class="r" style="left:1667px;top:682.5px;width:118.5px;height:54.5px;border:2px solid #e6e6e6;border-radius:7px;"></div>
<div class="t s" style="left:1686px;top:695.47px;font-size:28.5px;color:#222;">1</div>
<div class="t s" style="left:1793px;top:695.47px;font-size:28.5px;color:#222;">/ 1</div>
<div class="r" style="left:1838.5px;top:682.5px;width:55.0px;height:55.0px;border:2px solid #e6e6e6;border-radius:7px;background:#f9fafb;"></div>
<svg class="r" style="left:1858px;top:700px;" width="16" height="22" viewBox="0 0 16 22"><path d="M3 2 L12 11 L3 20" stroke="#c2c2c2" stroke-width="2.4" fill="none"/></svg>
<div class="r" style="left:1918.5px;top:682.5px;width:171.0px;height:54.5px;border:2px solid #e6e6e6;border-radius:7px;"></div>
<svg class="r" style="left:1941px;top:694px;" width="30" height="30" viewBox="0 0 30 30"><g stroke="#222" stroke-width="2.7" fill="none" stroke-linecap="round" stroke-linejoin="round"><path d="M15 3 V19 M8 12.5 L15 19.5 L22 12.5"/><path d="M2.5 19 V23.5 A3 3 0 0 0 5.5 26.5 H24.5 A3 3 0 0 0 27.5 23.5 V19"/></g></svg>
<div class="t s" style="left:1987px;top:695.47px;font-size:28.5px;color:#222;">Export</div>
<div class="r" style="left:449px;top:755px;width:1641px;height:466px;border:2px solid #e5e7eb;background:#fff;"></div>
<div class="r" style="left:451px;top:757px;width:1607px;height:64px;background:#f9fafb;"></div>
<div class="r" style="left:451px;top:820px;width:1607px;height:2px;background:#e5e7eb;"></div>
<div class="r" style="left:621.5px;top:755px;width:2.0px;height:466px;background:#e5e7eb;"></div>
<div class="r" style="left:992.8px;top:755px;width:2.0px;height:466px;background:#e5e7eb;"></div>
<div class="r" style="left:1204px;top:755px;width:2px;height:466px;background:#e5e7eb;"></div>
<div class="r" style="left:1423px;top:755px;width:2px;height:466px;background:#e5e7eb;"></div>
<div class="r" style="left:1586px;top:755px;width:2px;height:466px;background:#e5e7eb;"></div>
<div class="r" style="left:1957px;top:755px;width:2px;height:466px;background:#e5e7eb;"></div>
<div class="r" style="left:2057px;top:755px;width:2px;height:466px;background:#e5e7eb;"></div>
<div class="r" style="left:451px;top:878px;width:1508px;height:2px;background:#e5e7eb;"></div>
<div class="r" style="left:451px;top:936px;width:1508px;height:2px;background:#e5e7eb;"></div>
<div class="r" style="left:451px;top:994px;width:1508px;height:2px;background:#e5e7eb;"></div>
<div class="r" style="left:451px;top:1052px;width:1508px;height:2px;background:#e5e7eb;"></div>
<div class="r" style="left:451px;top:1110px;width:1508px;height:2px;background:#e5e7eb;"></div>
<div class="r" style="left:451px;top:1168px;width:1508px;height:2px;background:#e5e7eb;"></div>
<div class="r" style="left:2059px;top:757px;width:29px;height:462px;background:#fafafa;"></div>
<div class="r" style="left:2066px;top:762px;width:16px;height:60px;background:#c6c6c6;border-radius:8px;"></div>
<div class="t s" style="left:467px;top:776.61px;font-size:25.5px;color:#6b7280;letter-spacing:1.5px;-webkit-text-stroke:0.35px #6b7280;">emp_no</div>
<svg class="r" style="left:575px;top:776px;" width="27" height="25" viewBox="0 0 27 25"><g stroke="#d6d9de" stroke-width="2.4" fill="none"><path d="M7 1 V22 M1.5 16.5 L7 22.5 L12.5 16.5"/><path d="M13 3 H26 M13 8.5 H22 M13 14 H18"/></g></svg>
<div class="t s" style="left:640.5px;top:776.61px;font-size:25.5px;color:#6b7280;letter-spacing:1.5px;-webkit-text-stroke:0.35px #6b7280;">birth_date</div>
<svg class="r" style="left:781.5px;top:776px;" width="27" height="25" viewBox="0 0 27 25"><g stroke="#d6d9de" stroke-width="2.4" fill="none"><path d="M7 1 V22 M1.5 16.5 L7 22.5 L12.5 16.5"/><path d="M13 3 H26 M13 8.5 H22 M13 14 H18"/></g></svg>
<div class="t s" style="left:1011.8px;top:776.61px;font-size:25.5px;color:#6b7280;letter-spacing:1.5px;-webkit-text-stroke:0.35px #6b7280;">first_name</div>
<svg class="r" style="left:1156.8px;top:776px;" width="27" height="25" viewBox="0 0 27 25"><g stroke="#d6d9de" stroke-width="2.4" fill="none"><path d="M7 1 V22 M1.5 16.5 L7 22.5 L12.5 16.5"/><path d="M13 3 H26 M13 8.5 H22 M13 14 H18"/></g></svg>
<div class="t s" style="left:1223px;top:776.61px;font-size:25.5px;color:#6b7280;letter-spacing:1.5px;-webkit-text-stroke:0.35px #6b7280;">last_name</div>
<svg class="r" style="left:1362px;top:776px;" width="27" height="25" viewBox="0 0 27 25"><g stroke="#d6d9de" stroke-width="2.4" fill="none"><path d="M7 1 V22 M1.5 16.5 L7 22.5 L12.5 16.5"/><path d="M13 3 H26 M13 8.5 H22 M13 14 H18"/></g></svg>
<div class="t s" style="left:1442px;top:776.61px;font-size:25.5px;color:#6b7280;letter-spacing:1.5px;-webkit-text-stroke:0.35px #6b7280;">gender</div>
<svg class="r" style="left:1541px;top:776px;" width="27" height="25" viewBox="0 0 27 25"><g stroke="#d6d9de" stroke-width="2.4" fill="none"><path d="M7 1 V22 M1.5 16.5 L7 22.5 L12.5 16.5"/><path d="M13 3 H26 M13 8.5 H22 M13 14 H18"/></g></svg>
<div class="t s" style="left:1605px;top:776.61px;font-size:25.5px;color:#6b7280;letter-spacing:1.5px;-webkit-text-stroke:0.35px #6b7280;">hire_date</div>
<svg class="r" style="left:1734px;top:776px;" width="27" height="25" viewBox="0 0 27 25"><g stroke="#d6d9de" stroke-width="2.4" fill="none"><path d="M7 1 V22 M1.5 16.5 L7 22.5 L12.5 16.5"/><path d="M13 3 H26 M13 8.5 H22 M13 14 H18"/></g></svg>
<div class="t m" style="left:467px;top:836.02px;font-size:30px;color:#000;letter-spacing:-1.15px;-webkit-text-stroke:0.3px #000;">10001</div>
<div class="t m" style="left:640.5px;top:836.02px;font-size:30px;color:#000;letter-spacing:-1.15px;-webkit-text-stroke:0.3px #000;">1953&#8211;09&#8211;02T00:00:00Z</div>
<div class="t m" style="left:1011.8px;top:836.02px;font-size:30px;color:#000;letter-spacing:-1.15px;-webkit-text-stroke:0.3px #000;">Georgi</div>
<div class="t m" style="left:1223px;top:836.02px;font-size:30px;color:#000;letter-spacing:-1.15px;-webkit-text-stroke:0.3px #000;">Facello</div>
<div class="t m" style="left:1442px;top:836.02px;font-size:30px;color:#000;letter-spacing:-1.15px;-webkit-text-stroke:0.3px #000;">M</div>
<div class="t m" style="left:1605px;top:836.02px;font-size:30px;color:#000;letter-spacing:-1.15px;-webkit-text-stroke:0.3px #000;">1986&#8211;06&#8211;26T00:00:00Z</div>
<div class="t m" style="left:467px;top:894.02px;font-size:30px;color:#000;letter-spacing:-1.15px;-webkit-text-stroke:0.3px #000;">10002</div>
<div class="t m" style="left:640.5px;top:894.02px;font-size:30px;color:#000;letter-spacing:-1.15px;-webkit-text-stroke:0.3px #000;">1964&#8211;06&#8211;02T00:00:00Z</div>
<div class="t m" style="left:1011.8px;top:894.02px;font-size:30px;color:#000;letter-spacing:-1.15px;-webkit-text-stroke:0.3px #000;">Bezalel</div>
<div class="t m" style="left:1223px;top:894.02px;font-size:30px;color:#000;letter-spacing:-1.15px;-webkit-text-stroke:0.3px #000;">Simmel</div>
<div class="t m" style="left:1442px;top:894.02px;font-size:30px;color:#000;letter-spacing:-1.15px;-webkit-text-stroke:0.3px #000;">F</div>
<div class="t m" style="left:1605px;top:894.02px;font-size:30px;color:#000;letter-spacing:-1.15px;-webkit-text-stroke:0.3px #000;">1985&#8211;11&#8211;21T00:00:00Z</div>
<div class="t m" style="left:467px;top:952.02px;font-size:30px;color:#000;letter-spacing:-1.15px;-webkit-text-stroke:0.3px #000;">10003</div>
<div class="t m" style="left:640.5px;top:952.02px;font-size:30px;color:#000;letter-spacing:-1.15px;-webkit-text-stroke:0.3px #000;">1959&#8211;12&#8211;03T00:00:00Z</div>
<div class="t m" style="left:1011.8px;top:952.02px;font-size:30px;color:#000;letter-spacing:-1.15px;-webkit-text-stroke:0.3px #000;">Parto</div>
<div class="t m" style="left:1223px;top:952.02px;font-size:30px;color:#000;letter-spacing:-1.15px;-webkit-text-stroke:0.3px #000;">Bamford</div>
<div class="t m" style="left:1442px;top:952.02px;font-size:30px;color:#000;letter-spacing:-1.15px;-webkit-text-stroke:0.3px #000;">M</div>
<div class="t m" style="left:1605px;top:952.02px;font-size:30px;color:#000;letter-spacing:-1.15px;-webkit-text-stroke:0.3px #000;">1986&#8211;08&#8211;28T00:00:00Z</div>
<div class="t m" style="left:467px;top:1010.02px;font-size:30px;color:#000;letter-spacing:-1.15px;-webkit-text-stroke:0.3px #000;">10004</div>
<div class="t m" style="left:640.5px;top:1010.02px;font-size:30px;color:#000;letter-spacing:-1.15px;-webkit-text-stroke:0.3px #000;">1954&#8211;05&#8211;01T00:00:00Z</div>
<div class="t m" style="left:1011.8px;top:1010.02px;font-size:30px;color:#000;letter-spacing:-1.15px;-webkit-text-stroke:0.3px #000;">Chirstian</div>
<div class="t m" style="left:1223px;top:1010.02px;font-size:30px;color:#000;letter-spacing:-1.15px;-webkit-text-stroke:0.3px #000;">Koblick</div>
<div class="t m" style="left:1442px;top:1010.02px;font-size:30px;color:#000;letter-spacing:-1.15px;-webkit-text-stroke:0.3px #000;">M</div>
<div class="t m" style="left:1605px;top:1010.02px;font-size:30px;color:#000;letter-spacing:-1.15px;-webkit-text-stroke:0.3px #000;">1986&#8211;12&#8211;01T00:00:00Z</div>
<div class="t m" style="left:467px;top:1068.02px;font-size:30px;color:#000;letter-spacing:-1.15px;-webkit-text-stroke:0.3px #000;">10005</div>
<div class="t m" style="left:640.5px;top:1068.02px;font-size:30px;color:#000;letter-spacing:-1.15px;-webkit-text-stroke:0.3px #000;">1955&#8211;01&#8211;21T00:00:00Z</div>
<div class="t m" style="left:1011.8px;top:1068.02px;font-size:30px;color:#000;letter-spacing:-1.15px;-webkit-text-stroke:0.3px #000;">Kyoichi</div>
<div class="t m" style="left:1223px;top:1068.02px;font-size:30px;color:#000;letter-spacing:-1.15px;-webkit-text-stroke:0.3px #000;">Maliniak</div>
<div class="t m" style="left:1442px;top:1068.02px;font-size:30px;color:#000;letter-spacing:-1.15px;-webkit-text-stroke:0.3px #000;">M</div>
<div class="t m" style="left:1605px;top:1068.02px;font-size:30px;color:#000;letter-spacing:-1.15px;-webkit-text-stroke:0.3px #000;">1989&#8211;09&#8211;12T00:00:00Z</div>
<div class="t m" style="left:467px;top:1126.02px;font-size:30px;color:#000;letter-spacing:-1.15px;-webkit-text-stroke:0.3px #000;">10006</div>
<div class="t m" style="left:640.5px;top:1126.02px;font-size:30px;color:#000;letter-spacing:-1.15px;-webkit-text-stroke:0.3px #000;">1953&#8211;04&#8211;20T00:00:00Z</div>
<div class="t m" style="left:1011.8px;top:1126.02px;font-size:30px;color:#000;letter-spacing:-1.15px;-webkit-text-stroke:0.3px #000;">Anneke</div>
<div class="t m" style="left:1223px;top:1126.02px;font-size:30px;color:#000;letter-spacing:-1.15px;-webkit-text-stroke:0.3px #000;">Preusig</div>
<div class="t m" style="left:1442px;top:1126.02px;font-size:30px;color:#000;letter-spacing:-1.15px;-webkit-text-stroke:0.3px #000;">F</div>
<div class="t m" style="left:1605px;top:1126.02px;font-size:30px;color:#000;letter-spacing:-1.15px;-webkit-text-stroke:0.3px #000;">1989&#8211;06&#8211;02T00:00:00Z</div>
<div class="t m" style="left:467px;top:1184.02px;font-size:30px;color:#000;letter-spacing:-1.15px;-webkit-text-stroke:0.3px #000;">10007</div>
<div class="t m" style="left:640.5px;top:1184.02px;font-size:30px;color:#000;letter-spacing:-1.15px;-webkit-text-stroke:0.3px #000;">1957&#8211;05&#8211;23T00:00:00Z</div>
<div class="t m" style="left:1011.8px;top:1184.02px;font-size:30px;color:#000;letter-spacing:-1.15px;-webkit-text-stroke:0.3px #000;">Tzvetan</div>
<div class="t m" style="left:1223px;top:1184.02px;font-size:30px;color:#000;letter-spacing:-1.15px;-webkit-text-stroke:0.3px #000;">Zielinski</div>
<div class="t m" style="left:1442px;top:1184.02px;font-size:30px;color:#000;letter-spacing:-1.15px;-webkit-text-stroke:0.3px #000;">F</div>
<div class="t m" style="left:1605px;top:1184.02px;font-size:30px;color:#000;letter-spacing:-1.15px;-webkit-text-stroke:0.3px #000;">1989&#8211;02&#8211;10T00:00:00Z</div>
<div class="t s" style="left:450px;top:1233.83px;font-size:25px;color:#6b7280;">SELECT * FROM "public"."employee" LIMIT 50</div>
<div class="t s" style="right:19px;top:1233.83px;font-size:25px;color:#6b7280;">Query time: 5 ms</div>
</body></html>
